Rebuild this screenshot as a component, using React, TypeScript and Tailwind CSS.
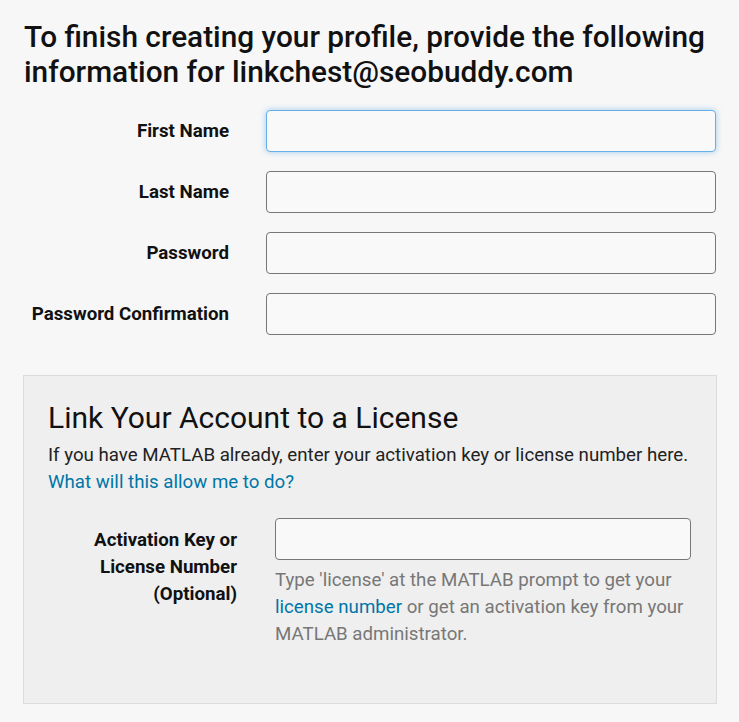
const fields = ["First Name", "Last Name", "Password", "Password Confirmation"];

export default function App() {
  return (
    <div
      className="min-h-[722px] w-[739px] bg-[#f7f7f7] pt-[19px] text-[#1a1a1a]"
      style={{ fontFamily: "Roboto, 'Noto Sans', sans-serif" }}
    >
      <h1 className="pl-[24px] pr-2 text-[29.8px] font-medium leading-[35px] text-[#111]">
        To finish creating your profile, provide the following information for linkchest@seobuddy.com
      </h1>

      <div className="mt-[21px] flex flex-col gap-[19px] pl-[24px]">
        {fields.map((label, i) => (
          <div key={label} className="grid grid-cols-[205px_450px] items-center gap-[37px]">
            <label className="text-right text-[18.7px] font-bold text-[#111]">{label}</label>
            <input
              type={label.startsWith("Password") ? "password" : "text"}
              className={
                i === 0
                  ? "h-[42px] rounded-[4px] border border-[#66afe9] bg-[#f9f9f9] px-3 shadow-[0_0_6px_rgba(102,175,233,0.6)] outline-none"
                  : "h-[42px] rounded-[4px] border border-[#777] bg-[#f9f9f9] px-3 outline-none"
              }
            />
          </div>
        ))}
      </div>

      <div className="ml-[23px] mt-[40px] h-[329px] w-[694px] border border-[#dcdcdc] bg-[#efefef] pl-[24px] pt-[24px]">
        <h2 className="text-[30px] font-normal leading-[36px] text-[#111]">Link Your Account to a License</h2>
        <p className="mt-[6px] text-[18.7px] leading-[27px] text-[#222]">
          If you have MATLAB already, enter your activation key or license number here.
          <br />
          <a href="#" className="text-[#0076a8]">What will this allow me to do?</a>
        </p>

        <div className="mt-[22px] grid grid-cols-[189px_416px] gap-[38px]">
          <label className="pt-[9px] text-right text-[18.7px] font-bold leading-[27px] text-[#111]">
            Activation Key or
            <br />
            License Number
            <br />
            (Optional)
          </label>
          <div>
            <input
              type="text"
              className="h-[42px] w-full rounded-[4px] border border-[#777] bg-[#f9f9f9] px-3 outline-none"
            />
            <p className="mt-[7px] text-[18.7px] leading-[27px] text-[#777]">
              Type 'license' at the MATLAB prompt to get your{" "}
              <a href="#" className="text-[#0076a8]">license number</a> or get an activation key from your MATLAB
              administrator.
            </p>
          </div>
        </div>
      </div>
    </div>
  );
}
